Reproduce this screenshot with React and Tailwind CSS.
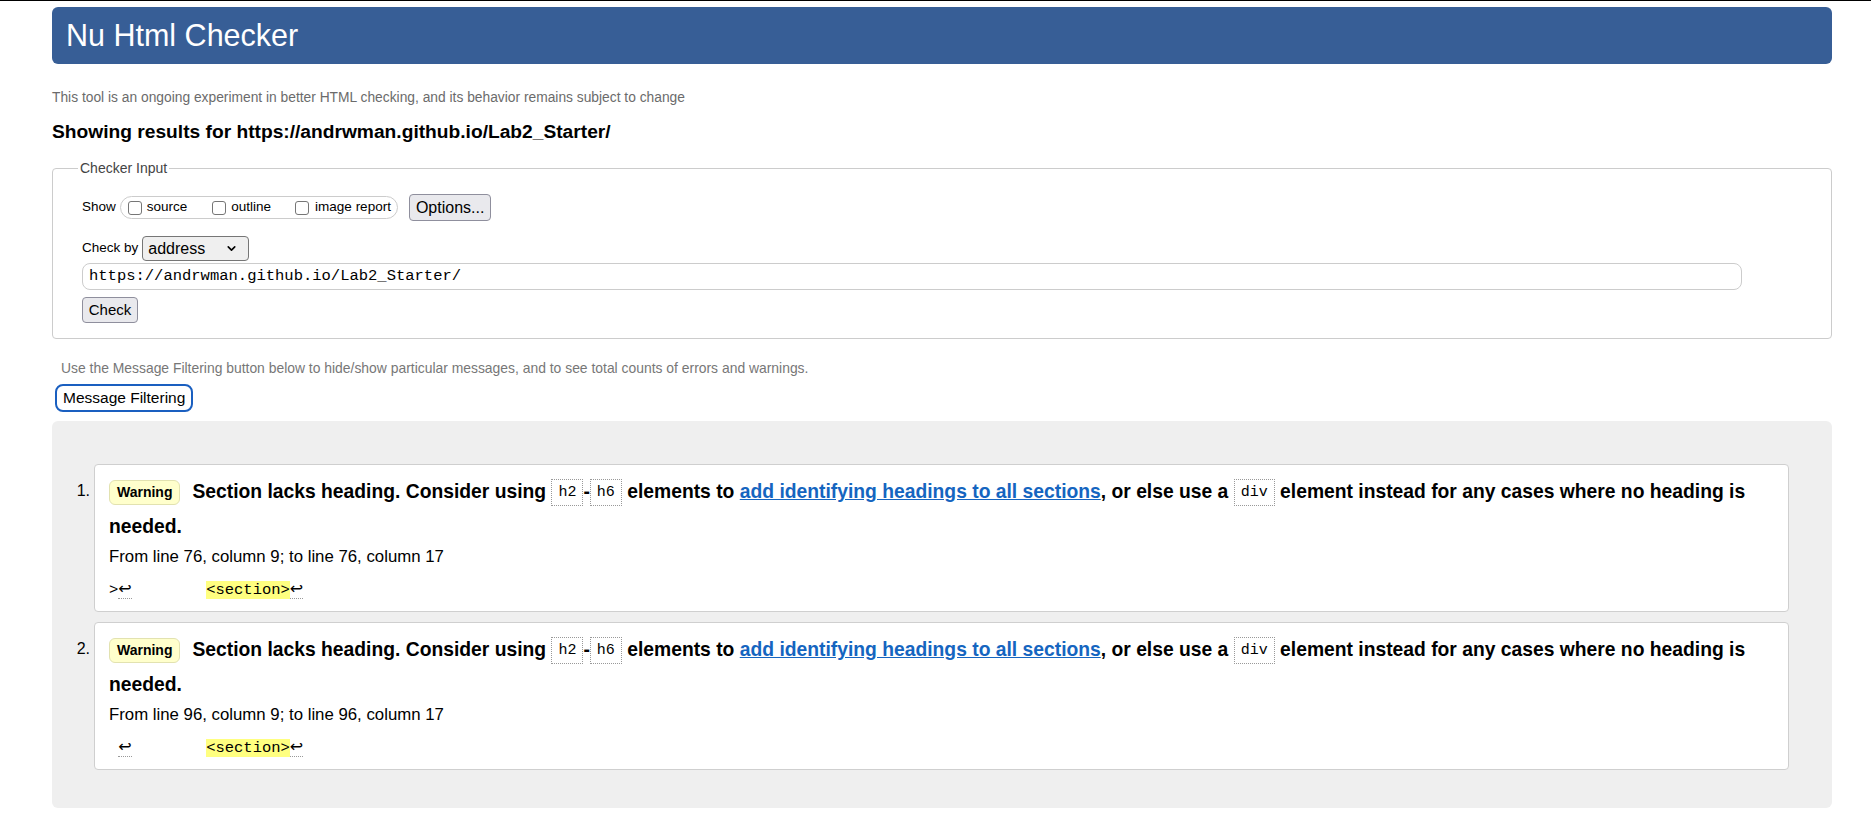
import { ChevronDown } from "lucide-react";

const messages = [
  { n: 1, from: "From line 76, column 9; to line 76, column 17", lead: ">" },
  { n: 2, from: "From line 96, column 9; to line 96, column 17", lead: " " },
];

function Code({ children }) {
  return (
    <code className="inline-block border border-dotted border-[#999] px-[6px] font-['Liberation_Mono',monospace] text-[15px] font-normal leading-[25px] align-middle">
      {children}
    </code>
  );
}

function Lf() {
  return <span className="border-b border-dotted border-[#999] font-['DejaVu_Sans',sans-serif] text-[16px]">↩</span>;
}

function Box() {
  return <span className="block h-[14px] w-[14px] rounded-[3px] border border-[#767676] bg-white" />;
}

function Message({ n, from, lead }) {
  return (
    <li className="flex">
      <div className="w-[42px] shrink-0 pr-[4px] pt-[9px] text-right text-[16px] leading-[35px]">{n}.</div>
      <div className="flex-1 rounded-[4px] border border-[#cfcfcf] bg-white pt-[9px] pb-[11px] pl-[14px] pr-[16px]">
        <p className="text-[19.3px] font-bold leading-[35px]">
          <span className="mr-[12px] inline-block rounded-[6px] border border-[#e2e2b0] bg-[#ffffcc] px-[7px] align-middle text-[14px] leading-[23px]">
            Warning
          </span>
          <span>Section lacks heading. Consider using </span>
          <Code>h2</Code>-<Code>h6</Code>
          <span> elements to </span>
          <a href="#" className="text-[#1565c0] underline">
            add identifying headings to all sections
          </a>
          <span>, or else use a </span>
          <Code>div</Code>
          <span> element instead for any cases where no heading is </span>
          <span>needed.</span>
        </p>
        <p className="mt-[3px] text-[16.8px] leading-[20px]">{from}</p>
        <p className="mt-[12px] whitespace-pre font-['Liberation_Mono',monospace] text-[15.5px] leading-[20px]">
          {lead}
          <Lf />
          {"        "}
          <span className="bg-[#ffff80]">&lt;section&gt;</span>
          <Lf />
        </p>
      </div>
    </li>
  );
}

export default function App() {
  return (
    <div className="min-h-screen bg-white font-['Liberation_Sans',Arial,sans-serif] text-black">
      <div className="h-px bg-black" />
      <div className="pl-[52px] pr-[39px] pt-[6px]">
        <header className="flex h-[57px] items-center rounded-[6px] bg-[#375e96] pl-[14px]">
          <h1 className="text-[30.5px] text-white">Nu Html Checker</h1>
        </header>

        <p className="mt-[26px] text-[13.8px] leading-[16px] text-[#6b6b6b]">
          This tool is an ongoing experiment in better HTML checking, and its behavior remains subject to change
        </p>
        <h2 className="mt-[16px] text-[19.2px] font-bold leading-[20px]">
          Showing results for https://andrwman.github.io/Lab2_Starter/
        </h2>

        <fieldset className="mt-[18px] rounded-[4px] border border-[#cccccc] pl-[29px] pr-[29px] pb-[15px]">
          <legend className="-ml-[4px] px-[2px] text-[14px] leading-[16px] text-[#444]">Checker Input</legend>
          <div className="mt-[18px] flex items-center text-[13.5px]">
            <span className="mr-[4px]">Show</span>
            <div className="flex h-[23px] items-center rounded-full border border-[#cccccc] pl-[7px] pr-[6px]">
              <Box />
              <span className="ml-[5px]">source</span>
              <span className="ml-[25px]">
                <Box />
              </span>
              <span className="ml-[5px]">outline</span>
              <span className="ml-[24px]">
                <Box />
              </span>
              <span className="ml-[6px]">image report</span>
            </div>
            <button className="ml-[11px] h-[27px] rounded-[4px] border border-[#8f8f9d] bg-[#e9e9ed] px-[6px] text-[16px]">
              Options...
            </button>
          </div>

          <div className="mt-[15px] flex items-center text-[13.5px]">
            <span className="mr-[4px]">Check by</span>
            <div className="flex h-[25px] w-[107px] items-center justify-between rounded-[4px] border border-[#767676] bg-[#efefef] pl-[5px] pr-[10px] text-[16px]">
              <span>address</span>
              <ChevronDown size={13} strokeWidth={3} />
            </div>
          </div>

          <div className="mt-[2px] mr-[60px] flex h-[27px] items-center rounded-[8px] border border-[#cccccc] px-[6px] font-['Liberation_Mono',monospace] text-[15.5px]">
            https://andrwman.github.io/Lab2_Starter/
          </div>

          <button className="mt-[7px] h-[26px] w-[56px] rounded-[4px] border border-[#8f8f9d] bg-[#e9e9ed] text-[15px]">
            Check
          </button>
        </fieldset>

        <p className="mt-[21px] ml-[9px] text-[13.9px] leading-[16px] text-[#777]">
          Use the Message Filtering button below to hide/show particular messages, and to see total counts of errors and warnings.
        </p>
        <button className="mt-[8px] ml-[3px] h-[28px] rounded-[8px] border-2 border-[#1a5fc0] bg-white px-[6px] text-[15.5px]">
          Message Filtering
        </button>

        <section className="mt-[9px] rounded-[6px] bg-[#efefef] pt-[43px] pb-[38px] pr-[43px]">
          <ol className="flex flex-col gap-[10px]">
            {messages.map((m) => (
              <Message key={m.n} {...m} />
            ))}
          </ol>
        </section>
      </div>
    </div>
  );
}
